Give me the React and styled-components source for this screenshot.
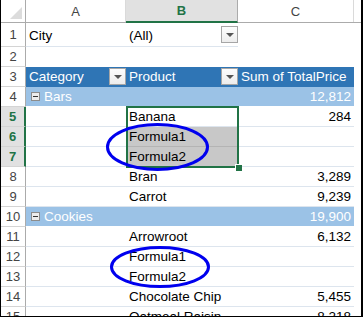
import React from "react";
import styled, { createGlobalStyle, css } from "styled-components";

const GREEN = "#217346";
const COLS = "25px 100px 112px 116px 1fr";

const GlobalStyle = createGlobalStyle`
  html, body { margin: 0; padding: 0; background: #fff; }
  body { font-family: "Liberation Sans", Arial, sans-serif; }
`;

const Sheet = styled.div`
  position: relative;
  width: 363px;
  height: 317px;
  box-sizing: border-box;
  border-left: 1px solid #000;
  border-right: 2px solid #000;
  border-bottom: 1px solid #000;
  overflow: hidden;
  background: #fff;
  font-size: 13.5px;
  color: #000;
`;

const HeaderRow = styled.div`
  display: grid;
  grid-template-columns: ${COLS};
  height: 23px;
  box-sizing: border-box;
  border-bottom: 1px solid #ababab;
  background: #fff;
`;

const Corner = styled.div`
  position: relative;
  border-right: 1px solid #ababab;
  &::after {
    content: "";
    position: absolute;
    right: 3px;
    bottom: 3px;
    width: 0;
    height: 0;
    border-left: 12px solid transparent;
    border-bottom: 12px solid #dcdcdc;
  }
`;

const ColHeader = styled.div`
  display: flex;
  align-items: center;
  justify-content: center;
  color: #444;
  font-size: 13px;
  box-sizing: border-box;
  border-right: 1px solid #dadada;
  ${(p) =>
    p.$active &&
    css`
      background: #e1e1e1;
      color: ${GREEN};
      font-weight: bold;
      border-bottom: 2px solid ${GREEN};
      border-right-color: #ababab;
      margin-bottom: -1px;
    `}
  ${(p) => p.$last && css`border-right: none;`}
`;

const Row = styled.div`
  display: grid;
  grid-template-columns: ${COLS};
  height: ${(p) => p.$h || 20}px;
`;

const RowNum = styled.div`
  display: flex;
  align-items: center;
  justify-content: center;
  box-sizing: border-box;
  font-size: 13px;
  color: #444;
  border-right: 1px solid #ababab;
  border-bottom: 1px solid #d4d4d4;
  ${(p) =>
    p.$sel &&
    css`
      background: #e1e1e1;
      color: ${GREEN};
      font-weight: bold;
      border-right: 2px solid ${GREEN};
    `}
`;

const Cell = styled.div`
  display: flex;
  align-items: ${(p) => (p.$bottom ? "flex-end" : "center")};
  justify-content: ${(p) => (p.$right ? "flex-end" : "flex-start")};
  box-sizing: border-box;
  padding: 0 3px ${(p) => (p.$bottom ? "3px" : "0")} 3px;
  white-space: nowrap;
  overflow: visible;
  border-bottom: 1px solid ${(p) => (p.$noLine ? "transparent" : "#dde5ee")};
  ${(p) =>
    p.$variant === "head" &&
    css`
      background: #2f75b5;
      color: #fff;
      border-bottom-color: #2f75b5;
    `}
  ${(p) =>
    p.$variant === "group" &&
    css`
      background: #9bc2e6;
      color: #fff;
      border-bottom-color: #fff;
    `}
  ${(p) =>
    p.$variant === "shaded" &&
    css`
      background: #c8c8c8;
      border-bottom-color: #b4b4b4;
    `}
  ${(p) =>
    p.$variant === "empty" &&
    css`
      border-bottom-color: transparent;
    `}
`;

const Label = styled.span`
  flex: 1;
  white-space: nowrap;
`;

const DropButton = styled.span`
  display: inline-flex;
  align-items: center;
  justify-content: center;
  flex: none;
  width: 17px;
  height: 17px;
  box-sizing: border-box;
  border: 1px solid #a6a6a6;
  background: linear-gradient(#fdfdfd, #ededed);
  margin-right: ${(p) => (p.$edge ? "-3px" : "0")};
  &::after {
    content: "";
    width: 0;
    height: 0;
    border-left: 4px solid transparent;
    border-right: 4px solid transparent;
    border-top: 4px solid #555;
    margin-top: 1px;
  }
`;

const Minus = styled.span`
  display: inline-flex;
  align-items: center;
  justify-content: center;
  width: 9px;
  height: 9px;
  box-sizing: border-box;
  border: 1px solid #8c8c8c;
  background: #ececec;
  margin: 0 4px 0 2px;
  &::after {
    content: "";
    width: 5px;
    height: 1px;
    background: #333;
  }
`;

const Selection = styled.div`
  position: absolute;
  left: 125px;
  top: 106px;
  width: 113px;
  height: 62px;
  box-sizing: border-box;
  border: 2px solid ${GREEN};
  pointer-events: none;
  &::after {
    content: "";
    position: absolute;
    right: -5px;
    bottom: -5px;
    width: 6px;
    height: 6px;
    background: ${GREEN};
    border: 1px solid #fff;
    border-right: none;
    border-bottom: none;
  }
`;

const Circle = styled.svg`
  position: absolute;
  left: ${(p) => p.$x}px;
  top: ${(p) => p.$y}px;
  pointer-events: none;
  overflow: visible;
`;

function Ring({ x, y, w, h }) {
  return (
    <Circle $x={x} $y={y} width={w} height={h} viewBox={`0 0 ${w} ${h}`}>
      <ellipse
        cx={w / 2}
        cy={h / 2}
        rx={w / 2 - 1.5}
        ry={h / 2 - 1.5}
        fill="none"
        stroke="#0000ee"
        strokeWidth="3"
      />
    </Circle>
  );
}

const body = [
  { n: 5, b: "Banana", c: "284", sel: true },
  { n: 6, b: "Formula1", c: "", sel: true, shaded: true },
  { n: 7, b: "Formula2", c: "", sel: true, shaded: true },
  { n: 8, b: "Bran", c: "3,289" },
  { n: 9, b: "Carrot", c: "9,239" },
  { n: 10, group: "Cookies", c: "19,900" },
  { n: 11, b: "Arrowroot", c: "6,132" },
  { n: 12, b: "Formula1", c: "" },
  { n: 13, b: "Formula2", c: "" },
  { n: 14, b: "Chocolate Chip", c: "5,455" },
  { n: 15, b: "Oatmeal Raisin", c: "8,218" },
];

export default function App() {
  return (
    <>
      <GlobalStyle />
      <Sheet>
        <HeaderRow>
          <Corner />
          <ColHeader>A</ColHeader>
          <ColHeader $active>B</ColHeader>
          <ColHeader>C</ColHeader>
          <ColHeader $last />
        </HeaderRow>

        <Row $h={24}>
          <RowNum>1</RowNum>
          <Cell $bottom>City</Cell>
          <Cell $bottom>
            <Label>(All)</Label>
            <DropButton $edge />
          </Cell>
          <Cell $variant="empty" />
          <Cell $variant="empty" />
        </Row>

        <Row>
          <RowNum>2</RowNum>
          <Cell $variant="empty" />
          <Cell $variant="empty" />
          <Cell $variant="empty" />
          <Cell $variant="empty" />
        </Row>

        <Row>
          <RowNum>3</RowNum>
          <Cell $variant="head">
            <Label>Category</Label>
            <DropButton $edge />
          </Cell>
          <Cell $variant="head">
            <Label>Product</Label>
            <DropButton $edge />
          </Cell>
          <Cell $variant="head">Sum of TotalPrice</Cell>
          <Cell $variant="empty" />
        </Row>

        <Row>
          <RowNum>4</RowNum>
          <Cell $variant="group">
            <Minus />
            Bars
          </Cell>
          <Cell $variant="group" />
          <Cell $variant="group" $right>
            12,812
          </Cell>
          <Cell $variant="empty" />
        </Row>

        {body.map((r) =>
          r.group ? (
            <Row key={r.n}>
              <RowNum>{r.n}</RowNum>
              <Cell $variant="group">
                <Minus />
                {r.group}
              </Cell>
              <Cell $variant="group" />
              <Cell $variant="group" $right>
                {r.c}
              </Cell>
              <Cell $variant="empty" />
            </Row>
          ) : (
            <Row key={r.n}>
              <RowNum $sel={r.sel}>{r.n}</RowNum>
              <Cell />
              <Cell $variant={r.shaded ? "shaded" : undefined}>{r.b}</Cell>
              <Cell $right>{r.c}</Cell>
              <Cell $variant="empty" />
            </Row>
          )
        )}

        <Selection />
        <Ring x={105} y={123} w={103} h={48} />
        <Ring x={109} y={246} w={100} h={42} />
      </Sheet>
    </>
  );
}
